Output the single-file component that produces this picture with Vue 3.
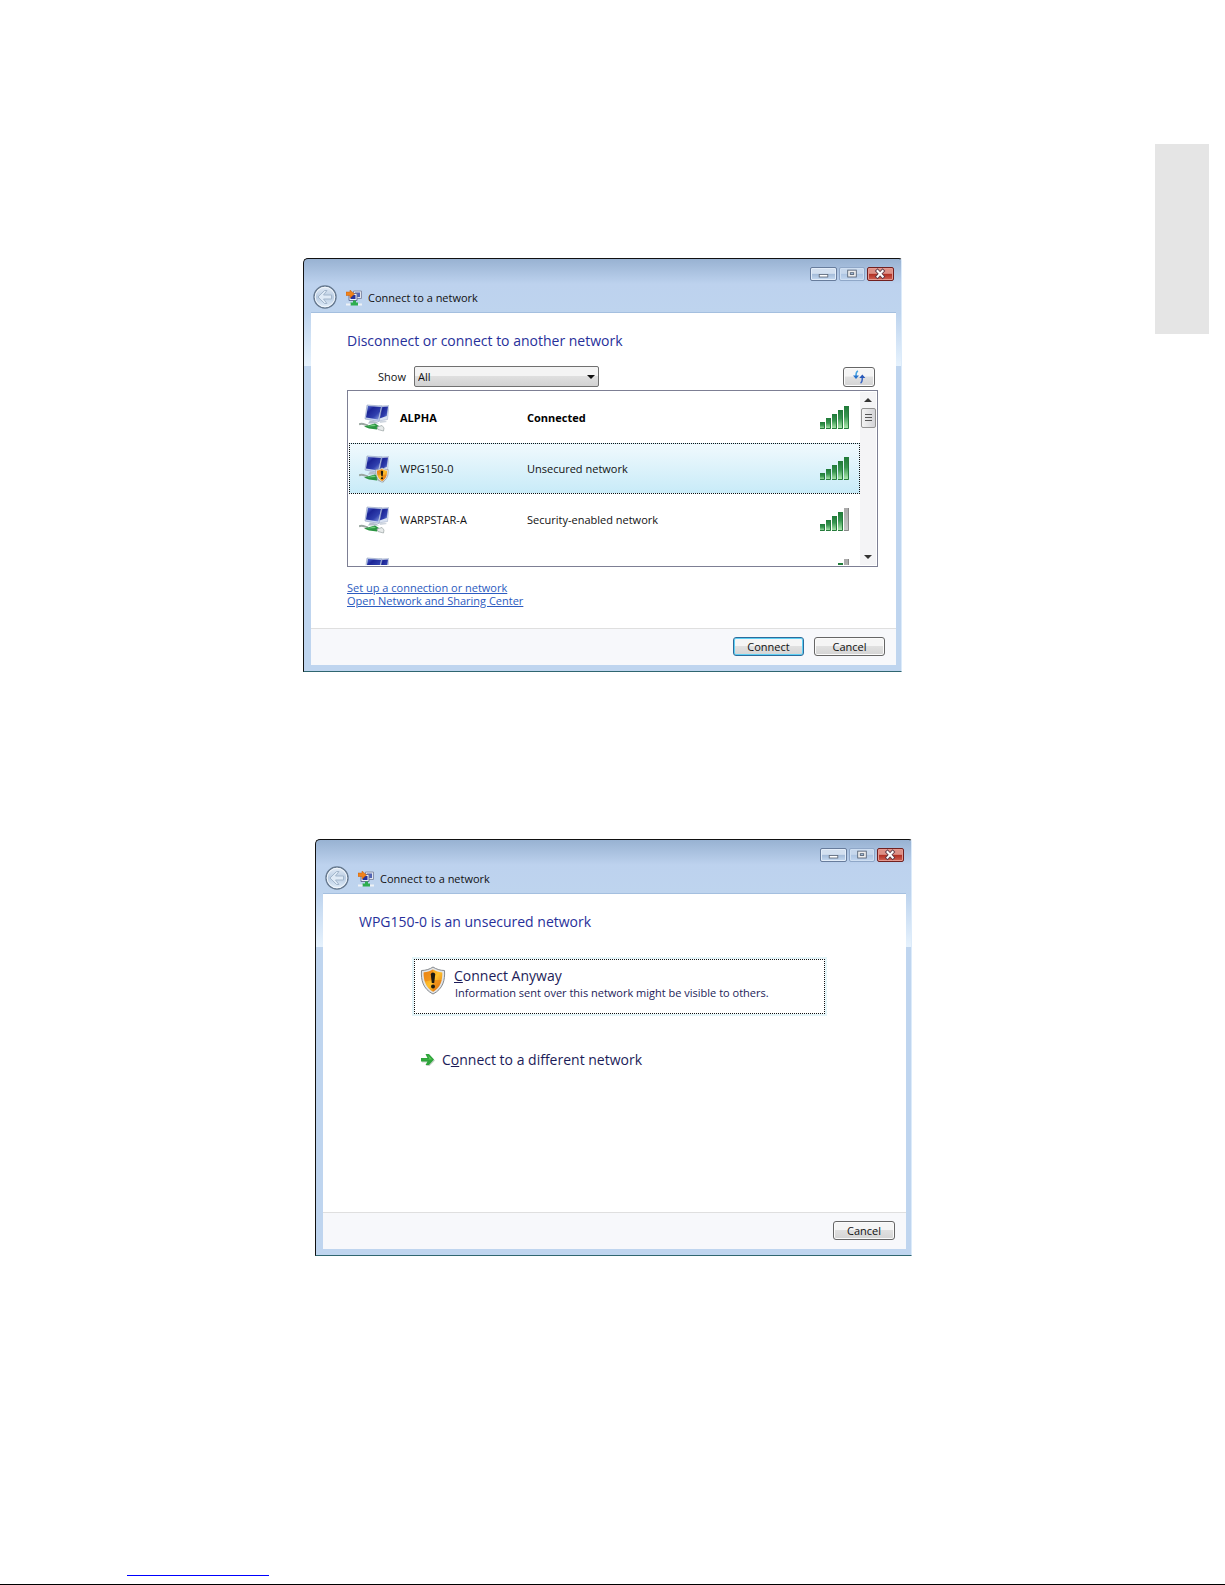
<template>
  <div class="page">
    <svg class="symbols" aria-hidden="true">
      <defs>
        <linearGradient id="screen" x1="0" y1="0" x2="1" y2="1">
          <stop offset="0" stop-color="#5a72d8" />
          <stop offset="0.3" stop-color="#1c2596" />
          <stop offset="0.65" stop-color="#3040ae" />
          <stop offset="1" stop-color="#9eb2ea" />
        </linearGradient>
        <linearGradient id="bar-on" x1="0" y1="0" x2="0" y2="1">
          <stop offset="0" stop-color="#1f7a38" />
          <stop offset="0.45" stop-color="#389650" />
          <stop offset="1" stop-color="#b4efb4" />
        </linearGradient>
        <linearGradient id="bar-off" x1="0" y1="0" x2="0" y2="1">
          <stop offset="0" stop-color="#a9a9a9" />
          <stop offset="1" stop-color="#c9c9c9" />
        </linearGradient>
        <linearGradient id="gold" x1="0" y1="0" x2="1" y2="1">
          <stop offset="0" stop-color="#f08a10" />
          <stop offset="0.5" stop-color="#ffc02c" />
          <stop offset="1" stop-color="#d86a08" />
        </linearGradient>
        <linearGradient id="orb" x1="0" y1="0" x2="0" y2="1">
          <stop offset="0" stop-color="#e6eef8" />
          <stop offset="0.5" stop-color="#b9cce2" />
          <stop offset="1" stop-color="#e4f0fb" />
        </linearGradient>
      </defs>

      <symbol id="shield" viewBox="0 0 26 29">
        <path d="M13 1C10 3 6 4.500 1.500 4.500C.8 14 3 23 13 28C23 23 25.200 14 24.500 4.500C20 4.500 16 3 13 1Z" fill="#e2e4e6" stroke="#85898d" />
        <path d="M13 3.500C10.500 5 7.500 6.200 3.700 6.500C3.400 14 5.500 21.500 13 25.800C20.500 21.500 22.600 14 22.300 6.500C18.500 6.200 15.500 5 13 3.500Z" fill="url(#gold)" />
        <path d="M13 3.500C10.500 5 7.500 6.200 3.700 6.500C3.600 10 4 13 5 15.500L13 14Z" fill="#e67812" opacity="0.5" />
        <path d="M13 14L21.600 14C20.600 19.500 17.800 23 13 25.800Z" fill="#e87812" opacity="0.5" />
        <path d="M10.800 8.500C10.800 5.700 15.200 5.700 15.200 8.500L14.200 17H11.800Z" fill="#1d1a10" />
        <circle cx="13" cy="20.500" r="2" fill="#1d1a10" />
      </symbol>

      <symbol id="computers" viewBox="0 0 30 28">
        <path d="M20 2L30 1.500L28.500 15.500L19.500 17Z" fill="#d9e2f2" stroke="#a9b5cc" stroke-width="0.600" />
        <path d="M21 3L29 2.500L27.800 12L20.500 14.500Z" fill="url(#screen)" />
        <path d="M8 1L23 2L20 17.500L6 15Z" fill="#c5d2ec" stroke="#8d9cc0" stroke-width="0.600" />
        <path d="M9 2L22 3L19.200 15.500L7 13.500Z" fill="url(#screen)" />
        <path d="M11 16.500L17 17.500L20 19.500H9Z" fill="#b4bdcc" />
        <path d="M20 17L26 16.500L28 18L21 19Z" fill="#cfd6df" />
        <path d="M0 20.500C3 18.500 6 21 9 21.500" fill="none" stroke="#9aa7a1" stroke-width="2" />
        <path d="M5 22.500L16 19.500L20 22L18 25.500L10 24.500Z" fill="#2a9440" />
        <path d="M8 22.500L15 20.500L17 22Z" fill="#74d080" />
        <path d="M18 23L23 21.500L25 24L24.500 27L19 25.500Z" fill="#e8ebeb" stroke="#9aa4a4" stroke-width="0.700" />
      </symbol>

      <symbol id="caption" viewBox="0 0 16 16">
        <path d="M7.500 1H15.500V8.500H7.500Z" fill="#e1e5ee" stroke="#8891ab" />
        <path d="M9 2.500H14V7H9Z" fill="#5264b4" />
        <path d="M3 3.500H11V10.500H3Z" fill="#eef0f7" stroke="#6a749a" />
        <path d="M4.500 5H9.500V9H4.500Z" fill="#24339c" />
        <path d="M0 2H4V0L8.500 4L4 8V5.500H0Z" fill="#f0821a" stroke="#c95c08" stroke-width="0.500" />
        <path d="M7 10.500H10V12.500H12V15.500H4.500V12.500H7Z" fill="#2eae4e" />
        <path d="M0 14.500H4.500M12 14.500H16" stroke="#eef2f6" stroke-width="2" />
      </symbol>

      <symbol id="back" viewBox="0 0 24 24">
        <circle cx="12" cy="12" r="11" fill="url(#orb)" stroke="#66798f" stroke-width="1.400" />
        <circle cx="12" cy="12" r="9.800" fill="none" stroke="#f2f7fc" />
        <path d="M5 12L11.500 5.500H14L10.500 10H18.500V14H10.500L14 18.500H11.500Z" fill="#dfeaf6" stroke="#a3b6cb" />
      </symbol>

      <symbol id="refresh" viewBox="0 0 14 14">
        <path d="M6 1C4.500 1.500 4 3 4 6" fill="none" stroke="#43a3e2" stroke-width="1.600" />
        <path d="M1 5.500H7L4 9Z" fill="#2672cc" />
        <path d="M8.500 13C9.800 12.500 10.300 11 10.300 8" fill="none" stroke="#3d68c4" stroke-width="1.600" />
        <path d="M7.300 8H13.300L10.300 4.500Z" fill="#2858b8" />
      </symbol>

      <symbol id="go" viewBox="0 0 14 14">
        <path d="M1 6H7L5 2H8.500L14 7.500L8.500 13H5L7 9.500H1Z" fill="#c9d3ca" />
        <path d="M0 5H6.500L4.500 1H8L13 6.500L8 12H4.500L6.500 8.500H0Z" fill="#2fa53c" />
        <path d="M1 6H8.500L7 2.500L11 6.500Z" fill="#62cc5a" />
      </symbol>
    </svg>

    <main class="figures">
      <section v-for="dialog in dialogs" :key="dialog.id" class="dialog" :class="dialog.id">
        <header class="titlebar">
          <button class="back" type="button" aria-label="Back">
            <svg><use href="#back" /></svg>
          </button>
          <svg class="caption-icon" aria-hidden="true"><use href="#caption" /></svg>
          <span class="caption">Connect to a network</span>
          <div class="window-buttons">
            <button type="button" aria-label="Minimize">
              <svg viewBox="0 0 27 14"><rect x="8.500" y="7.500" width="10" height="3" fill="#fff" stroke="#5d6878" /></svg>
            </button>
            <button type="button" class="maximize" aria-label="Maximize">
              <svg viewBox="0 0 27 14">
                <rect x="8.500" y="2.500" width="10" height="8" fill="#eee" stroke="#525f72" />
                <rect x="11.500" y="5.500" width="4" height="2" fill="#a8c4e4" stroke="#525f72" />
              </svg>
            </button>
            <button type="button" class="close" aria-label="Close">
              <svg viewBox="0 0 27 14">
                <path d="M10 3.500L16 10M16 3.500L10 10" stroke="#5b3a48" stroke-width="4.400" stroke-linecap="square" />
                <path d="M10 3.500L16 10M16 3.500L10 10" stroke="#fff" stroke-width="2.400" stroke-linecap="square" />
              </svg>
            </button>
          </div>
        </header>

        <div class="body">
          <h2>{{ dialog.heading }}</h2>

          <template v-if="dialog.id === 'picker'">
            <div class="filter">
              <label for="show">Show</label>
              <span class="select">
                <select id="show" v-model="show">
                  <option>All</option>
                </select>
              </span>
              <button class="button refresh" type="button" aria-label="Refresh">
                <svg><use href="#refresh" /></svg>
              </button>
            </div>

            <div class="list">
              <ul>
                <li
                  v-for="(network, i) in networks"
                  :key="i"
                  :class="{ connected: i === 0, selected: i === selected }"
                  @click="selected = i"
                >
                  <span class="device">
                    <svg class="computers"><use href="#computers" /></svg>
                    <svg v-if="network.open" class="badge"><use href="#shield" /></svg>
                  </span>
                  <span class="name">{{ network.name }}</span>
                  <span class="status">{{ network.status }}</span>
                  <svg class="signal" viewBox="0 0 29 23">
                    <rect
                      v-for="(h, n) in bars"
                      :key="n"
                      :x="n * 6"
                      :y="23 - h"
                      width="5"
                      :height="h"
                      :fill="n < network.signal ? 'url(#bar-on)' : 'url(#bar-off)'"
                    />
                    <path
                      v-for="(h, n) in bars"
                      :key="'edge' + n"
                      :d="`M${n * 6} 22.5h4.500V${23 - h}`"
                      fill="none"
                      :stroke="n < network.signal ? '#267a3c' : '#888'"
                    />
                  </svg>
                </li>
              </ul>
              <div class="scrollbar">
                <button type="button" class="up" aria-label="Scroll up"></button>
                <div class="thumb"></div>
                <button type="button" class="down" aria-label="Scroll down"></button>
              </div>
            </div>

            <nav class="links">
              <a href="#setup">Set up a connection or network</a>
              <a href="#center">Open Network and Sharing Center</a>
            </nav>
          </template>

          <div v-else class="commands">
            <button class="command primary" type="button">
              <svg class="shield"><use href="#shield" /></svg>
              <span class="command-text">
                <span class="command-title"><u>C</u>onnect Anyway</span>
                <span class="command-note">Information sent over this network might be visible to others.</span>
              </span>
            </button>
            <button class="command" type="button">
              <svg class="go"><use href="#go" /></svg>
              <span class="command-title">C<u>o</u>nnect to a different network</span>
            </button>
          </div>
        </div>

        <footer class="actions">
          <button v-if="dialog.id === 'picker'" class="button default" type="button">Connect</button>
          <button class="button" type="button">Cancel</button>
        </footer>
      </section>
    </main>

    <aside class="side-tab"></aside>

    <div class="page-end">
      <div class="rule"></div>
    </div>
  </div>
</template>

<script setup>
import { ref } from 'vue';

const dialogs = [
  { id: 'picker', heading: 'Disconnect or connect to another network' },
  { id: 'confirm', heading: 'WPG150-0 is an unsecured network' }
];

const networks = [
  { name: 'ALPHA', status: 'Connected', signal: 5 },
  { name: 'WPG150-0', status: 'Unsecured network', signal: 5, open: true },
  { name: 'WARPSTAR-A', status: 'Security-enabled network', signal: 4 },
  { name: '', status: '', signal: 4 }
];

const bars = [7, 11, 15, 19, 23];
const show = ref('All');
const selected = ref(1);
</script>

<style>
body {
  margin: 0;
  background: #fff;
}
</style>

<style scoped>
.page {
  display: grid;
  grid-template-columns: minmax(0, 1fr) 54px;
  grid-template-rows: 1fr auto;
  min-height: 100vh;
  font-family: "Open Sans", "Noto Sans", sans-serif;
  font-size: 11px;
  line-height: 14px;
  color: #111;
}

.symbols {
  position: absolute;
  width: 0;
  height: 0;
}

.page * {
  box-sizing: border-box;
}

button,
select {
  font: inherit;
  color: inherit;
  padding: 0;
}

.figures {
  display: flex;
  flex-direction: column;
  gap: 167px;
  padding: 258px 0 40px 303px;
}

.side-tab {
  height: 190px;
  margin: 144px 16px 0 -16px;
  width: 54px;
  background: #e5e5e5;
}

.page-end {
  grid-column: 1 / -1;
  padding: 0 127px 8px;
  border-bottom: 1px solid #000;
}

.rule {
  width: 142px;
  height: 1px;
  background: #00f;
}

.dialog {
  display: flex;
  flex-direction: column;
  width: 100%;
  max-width: 599px;
  padding: 0 5px 6px 7px;
  border: 1px solid #111;
  border-right-color: #dcebfa;
  border-bottom-color: #2f6670;
  border-radius: 5px 3px 0 0;
  background:
    linear-gradient(#bed4ee, #e6f2fd) 0 54px / 100% 53px no-repeat,
    linear-gradient(#98b2d2, #bdd2ee 25px, #bed4ee 54px) 0 0 / 100% 54px no-repeat,
    #bfd5ef;
}

.confirm {
  max-width: 597px;
  margin-left: 12px;
}

.titlebar {
  display: flex;
  align-items: flex-end;
  height: 54px;
  padding: 0 2px 3px 2px;
  border-bottom: 1px solid #a4bfdf;
}

.back {
  width: 24px;
  height: 24px;
  border: 0;
  background: none;
}

.back svg,
.window-buttons svg {
  display: block;
  width: 100%;
  height: 100%;
}

.caption-icon {
  width: 16px;
  height: 16px;
  margin: 0 6px 3px 9px;
}

.caption {
  padding-bottom: 4px;
}

.window-buttons {
  display: flex;
  gap: 2px;
  align-self: flex-start;
  margin: 8px 0 0 auto;
}

.window-buttons button {
  width: 27px;
  height: 14px;
  border: 1px solid #677c9c;
  border-radius: 2px;
  background: linear-gradient(#d3e0f0 45%, #a3bbd9 50%, #c6daf1);
  box-shadow: inset 0 0 0 1px #e3edf9;
}

.window-buttons .maximize {
  width: 26px;
  border-color: #8fa7c8;
  background: linear-gradient(#c6d7ec 45%, #acc4e2 50%, #c3d7f0);
  box-shadow: inset 0 0 0 1px #cfdff2;
}

.window-buttons .close {
  border-color: #712020;
  background: linear-gradient(#dd9086 45%, #b02d22 50%, #d06355);
  box-shadow: inset 0 0 0 1px #e59a92;
}

.body {
  min-height: 315px;
  padding: 18px 18px 0 36px;
  background: #fff;
}

.confirm .body {
  min-height: 318px;
}

h2 {
  margin: 0;
  font-size: 14px;
  font-weight: 400;
  line-height: 20px;
  color: #27309a;
}

.filter {
  display: flex;
  align-items: center;
  height: 21px;
  margin: 15px 3px 3px 0;
  padding-left: 31px;
}

.filter label {
  width: 36px;
}

.select {
  position: relative;
  width: 185px;
}

.select::after {
  content: "";
  position: absolute;
  top: 9px;
  right: 4px;
  border: 4px solid transparent;
  border-top-color: #111;
  border-bottom: 0;
  pointer-events: none;
}

.select select {
  display: block;
  width: 100%;
  height: 21px;
  padding-left: 3px;
  appearance: none;
  border: 1px solid #707070;
  border-radius: 2px;
  background: linear-gradient(#f4f4f4 45%, #dfdfdf 50%, #d2d2d2);
}

.button {
  width: 71px;
  height: 19px;
  border: 1px solid #666;
  border-radius: 3px;
  background: linear-gradient(#f5f5f5 45%, #e0e0e0 50%, #d4d4d4);
  box-shadow: inset 0 0 0 1px #fbfbfb;
}

.refresh {
  display: grid;
  place-items: center;
  width: 32px;
  height: 20px;
  margin-left: auto;
}

.refresh svg {
  width: 14px;
  height: 14px;
}

.list {
  display: flex;
  height: 177px;
  padding: 1px;
  border: 1px solid #7d7f94;
}

.list ul {
  flex: 1;
  margin: 0;
  padding: 0;
  overflow: hidden;
  list-style: none;
}

.list li {
  display: flex;
  align-items: center;
  height: 51px;
  padding: 0 10px 0 9px;
  border: 1px dotted transparent;
}

.list .selected {
  border-color: #111;
  background: linear-gradient(#f0f9fd, #c8ebf8);
}

.connected {
  font-weight: 700;
  color: #000;
}

.device {
  position: relative;
  width: 41px;
  height: 28px;
}

.computers {
  width: 30px;
  height: 28px;
}

.badge {
  position: absolute;
  top: 12px;
  left: 16px;
  width: 14px;
  height: 16px;
}

.name {
  width: 127px;
}

.signal {
  width: 29px;
  height: 23px;
  margin-left: auto;
}

.scrollbar {
  display: flex;
  flex-direction: column;
  align-items: center;
  width: 16px;
  background: #f4f4f6;
}

.scrollbar button {
  width: 15px;
  height: 16px;
  border: 0;
  background: none;
}

.scrollbar button::before {
  content: "";
  display: block;
  width: 0;
  margin: 0 auto;
  border: 4px solid transparent;
}

.scrollbar .up::before {
  border-top: 0;
  border-bottom-color: #333;
}

.scrollbar .down {
  margin-top: auto;
}

.scrollbar .down::before {
  border-bottom: 0;
  border-top-color: #333;
}

.thumb {
  width: 15px;
  height: 20px;
  padding: 5px 3px;
  border: 1px solid #929292;
  border-radius: 2px;
  background: repeating-linear-gradient(#555 0 1px, transparent 1px 3px) content-box, linear-gradient(90deg, #f5f5f5, #d2d2d6) border-box;
}

.links {
  display: flex;
  flex-direction: column;
  align-items: flex-start;
  padding-top: 14px;
}

.links a {
  line-height: 13px;
  color: #2c5bc0;
}

.actions {
  display: flex;
  justify-content: flex-end;
  gap: 10px;
  height: 37px;
  padding: 8px 11px 0;
  border-top: 1px solid #dfdfdf;
  background: #f7f8fb;
}

.default {
  border-color: #2c6c9c;
  box-shadow: inset 0 0 0 1px #5fd0f4;
}

.confirm .button {
  width: 62px;
}

.commands {
  padding: 27px 63px 0 55px;
}

.command {
  display: flex;
  align-items: center;
  width: 100%;
  padding: 0 7px;
  border: 0;
  background: none;
  text-align: left;
  color: #1c1c58;
}

.primary {
  align-items: flex-start;
  height: 55px;
  margin-bottom: 36px;
  padding: 6px 5px;
  border: 1px dotted #111;
  box-shadow: 0 0 0 2px #e4f5f9;
}

.shield {
  flex: none;
  width: 26px;
  height: 29px;
  margin-right: 8px;
}

.command-text,
.command-title,
.command-note {
  display: block;
}

.command-title {
  font-size: 14px;
  line-height: 20px;
}

.command-note {
  padding-left: 1px;
}

.go {
  width: 14px;
  height: 14px;
  margin-right: 7px;
}
</style>
